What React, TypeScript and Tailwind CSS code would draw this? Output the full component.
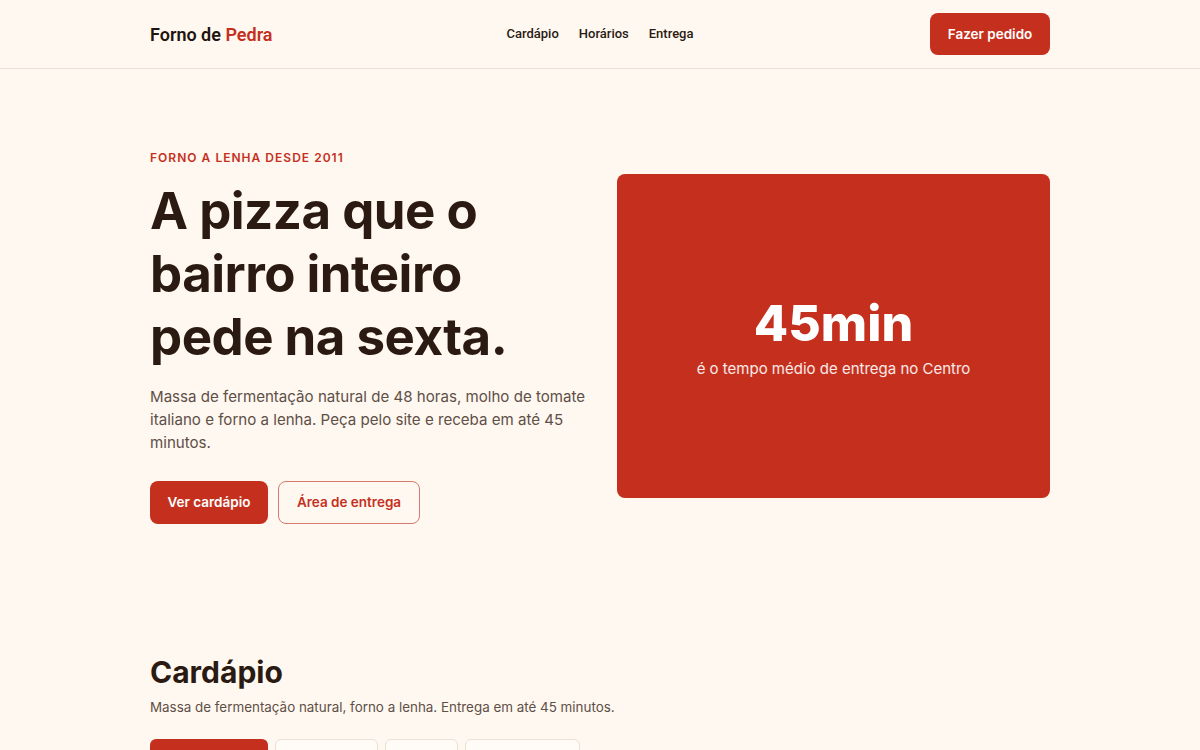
import React from 'react';

const tabs = [
  { label: 'Tradicionais', w: 'w-[118px]' },
  { label: 'Especiais', w: 'w-[103px]' },
  { label: 'Doces', w: 'w-[73px]' },
  { label: 'Vegetarianas', w: 'w-[115px]' },
];

export default function App() {
  return (
    <div className="min-h-screen bg-[#fff8f0] text-[#2a1a12]" style={{ fontFamily: 'Inter, "Noto Sans", sans-serif' }}>
      <header className="border-b border-[#ecdfd3]">
        <div className="mx-auto grid h-[68px] w-[900px] grid-cols-3 items-center">
          <a className="text-[18px] font-semibold text-[#1f140e]" style={{ fontFamily: 'Roboto, sans-serif' }}>
            Forno de <span className="text-[#c5301e]">Pedra</span>
          </a>
          <nav className="flex justify-center gap-5 text-[13px] font-medium" style={{ fontFamily: 'Roboto, sans-serif' }}>
            <a>Cardápio</a>
            <a>Horários</a>
            <a>Entrega</a>
          </nav>
          <div className="flex justify-end">
            <button className="h-[42px] w-[120px] rounded-lg bg-[#c5301e] text-[13.5px] font-semibold text-white">
              Fazer pedido
            </button>
          </div>
        </div>
      </header>

      <section className="mx-auto grid w-[900px] grid-cols-[446px_433px] items-center gap-[21px] pb-[80px] pt-[80px]">
        <div className="min-w-0">
          <p className="text-[12px] font-semibold uppercase tracking-[0.085em] text-[#c5301e]">
            Forno a lenha desde 2011
          </p>
          <h1 className="mt-[13px] text-[51px] font-bold leading-[1.235] tracking-[-0.01em]">
            A pizza que o<br />bairro inteiro<br />pede na sexta.
          </h1>
          <p className="mt-[16px] w-[460px] text-[15.1px] leading-[23px] text-[#5e4f47]">
            Massa de fermentação natural de 48 horas, molho de tomate italiano e forno a lenha. Peça pelo site e
            receba em até 45 minutos.
          </p>
          <div className="mt-[27px] flex gap-[10px]">
            <button className="h-[43px] w-[118px] rounded-lg bg-[#c5301e] text-[13.5px] font-semibold text-white">
              Ver cardápio
            </button>
            <button className="h-[43px] w-[142px] rounded-lg border border-[#d77a6e] text-[13.5px] font-semibold text-[#c5301e]">
              Área de entrega
            </button>
          </div>
        </div>
        <div className="flex h-[324px] flex-col items-center justify-center rounded-lg bg-[#c5301e] pt-[6px] text-white">
          <div className="text-[50px] font-extrabold leading-none">45min</div>
          <div className="mt-[10px] text-[15px] text-white/90">é o tempo médio de entrega no Centro</div>
        </div>
      </section>

      <section className="mx-auto w-[900px] pt-[50px]">
        <h2 className="text-[30px] font-bold leading-9">Cardápio</h2>
        <p className="mt-[7px] text-[13.4px] text-[#5e4f47]">
          Massa de fermentação natural, forno a lenha. Entrega em até 45 minutos.
        </p>
        <div className="mt-[22px] flex gap-[7px]">
          {tabs.map((t, i) => (
            <button
              key={t.label}
              className={
                i === 0
                  ? `h-[38px] ${t.w} rounded-md bg-[#c5301e] text-[14px] font-medium text-white`
                  : `h-[38px] ${t.w} rounded-md border border-[#ecdfd3] bg-[#fffbf6] text-[14px] font-medium text-[#5e4f47]`
              }
            >
              {t.label}
            </button>
          ))}
        </div>
      </section>
    </div>
  );
}
